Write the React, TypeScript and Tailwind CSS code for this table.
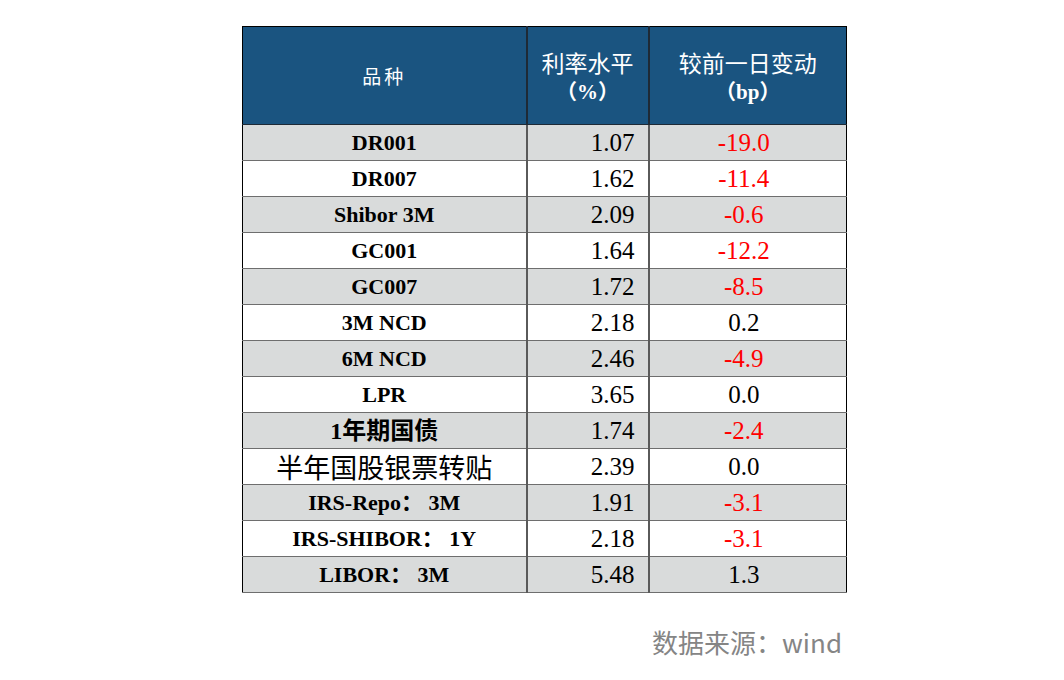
const rows: { name: string; rate: string; chg: string; up?: boolean; kind?: 'plain' | 'cjk' }[] = [
  { name: 'DR001', rate: '1.07', chg: '-19.0' },
  { name: 'DR007', rate: '1.62', chg: '-11.4' },
  { name: 'Shibor 3M', rate: '2.09', chg: '-0.6' },
  { name: 'GC001', rate: '1.64', chg: '-12.2' },
  { name: 'GC007', rate: '1.72', chg: '-8.5' },
  { name: '3M NCD', rate: '2.18', chg: '0.2', up: true },
  { name: '6M NCD', rate: '2.46', chg: '-4.9' },
  { name: 'LPR', rate: '3.65', chg: '0.0', up: true },
  { name: '1年期国债', rate: '1.74', chg: '-2.4', kind: 'cjk' },
  { name: '半年国股银票转贴', rate: '2.39', chg: '0.0', up: true, kind: 'plain' },
  { name: 'IRS-Repo： 3M', rate: '1.91', chg: '-3.1' },
  { name: 'IRS-SHIBOR： 1Y', rate: '2.18', chg: '-3.1' },
  { name: 'LIBOR： 3M', rate: '5.48', chg: '1.3', up: true },
]

function nameClass(kind?: 'plain' | 'cjk') {
  if (kind === 'plain')
    return "border-r-2 border-r-[#5a5a5a] border-b border-b-[#6e6e6e] text-center text-[27px] leading-[34px] whitespace-nowrap text-black font-['Noto_Sans_CJK_SC',sans-serif]"
  if (kind === 'cjk')
    return "border-r-2 border-r-[#5a5a5a] border-b border-b-[#6e6e6e] text-center text-[24px] leading-[34px] font-bold text-black font-['Liberation_Serif','Noto_Sans_CJK_SC',serif]"
  return "border-r-2 border-r-[#5a5a5a] border-b border-b-[#6e6e6e] text-center text-[22px] leading-[34px] font-bold text-black whitespace-pre font-['Liberation_Serif','Noto_Sans_CJK_SC',serif]"
}

export default function App() {
  return (
    <div className="w-[1064px] h-[680px] bg-white pt-[26px] pl-[242px]">
      <table className="border-collapse border border-black table-fixed w-[604px]">
        <colgroup>
          <col className="w-[284px]" />
          <col className="w-[122px]" />
          <col className="w-[198px]" />
        </colgroup>
        <thead>
          <tr className="h-[98px] bg-[#1a5480] text-white font-['Noto_Sans_CJK_SC',serif]">
            <th className="border-r-2 border-b border-r-[#1e2a36] border-b-[#1e2a36] text-[19px] font-normal tracking-[3px] pt-[2px]">品种</th>
            <th className="border-r-2 border-b border-r-[#1e2a36] border-b-[#1e2a36] text-[23px] font-normal leading-[30px] pt-[2px]">
              <div>利率水平</div>
              <div className="font-['Liberation_Serif','Noto_Sans_CJK_SC',serif] font-bold text-[21px]">（%）</div>
            </th>
            <th className="border-b border-b-[#1e2a36] text-[23px] font-normal leading-[30px] pt-[2px]">
              <div>较前一日变动</div>
              <div className="font-['Liberation_Serif','Noto_Sans_CJK_SC',serif] font-bold text-[21px]">（bp）</div>
            </th>
          </tr>
        </thead>
        <tbody>
          {rows.map((r, i) => (
            <tr key={r.name} className={`h-[36px] ${i % 2 === 0 ? 'bg-[#d9dbdb]' : 'bg-white'}`}>
              <td className={nameClass(r.kind)}>{r.name}</td>
              <td className="border-r-2 border-r-[#5a5a5a] border-b border-b-[#6e6e6e] text-right pr-[13px] text-[25px] leading-[34px] text-black font-['Liberation_Serif',serif]">
                {r.rate}
              </td>
              <td
                className={`border-b border-b-[#6e6e6e] text-center pr-[8px] text-[25px] leading-[34px] font-['Liberation_Serif',serif] ${
                  r.up ? 'text-black' : 'text-[#ff0000]'
                }`}
              >
                {r.chg}
              </td>
            </tr>
          ))}
        </tbody>
      </table>
      <div className="w-[600px] mt-[33px] text-right text-[26px] leading-[32px] text-[#858585] font-['Noto_Sans_CJK_SC',sans-serif]">
        数据来源：wind
      </div>
    </div>
  )
}
